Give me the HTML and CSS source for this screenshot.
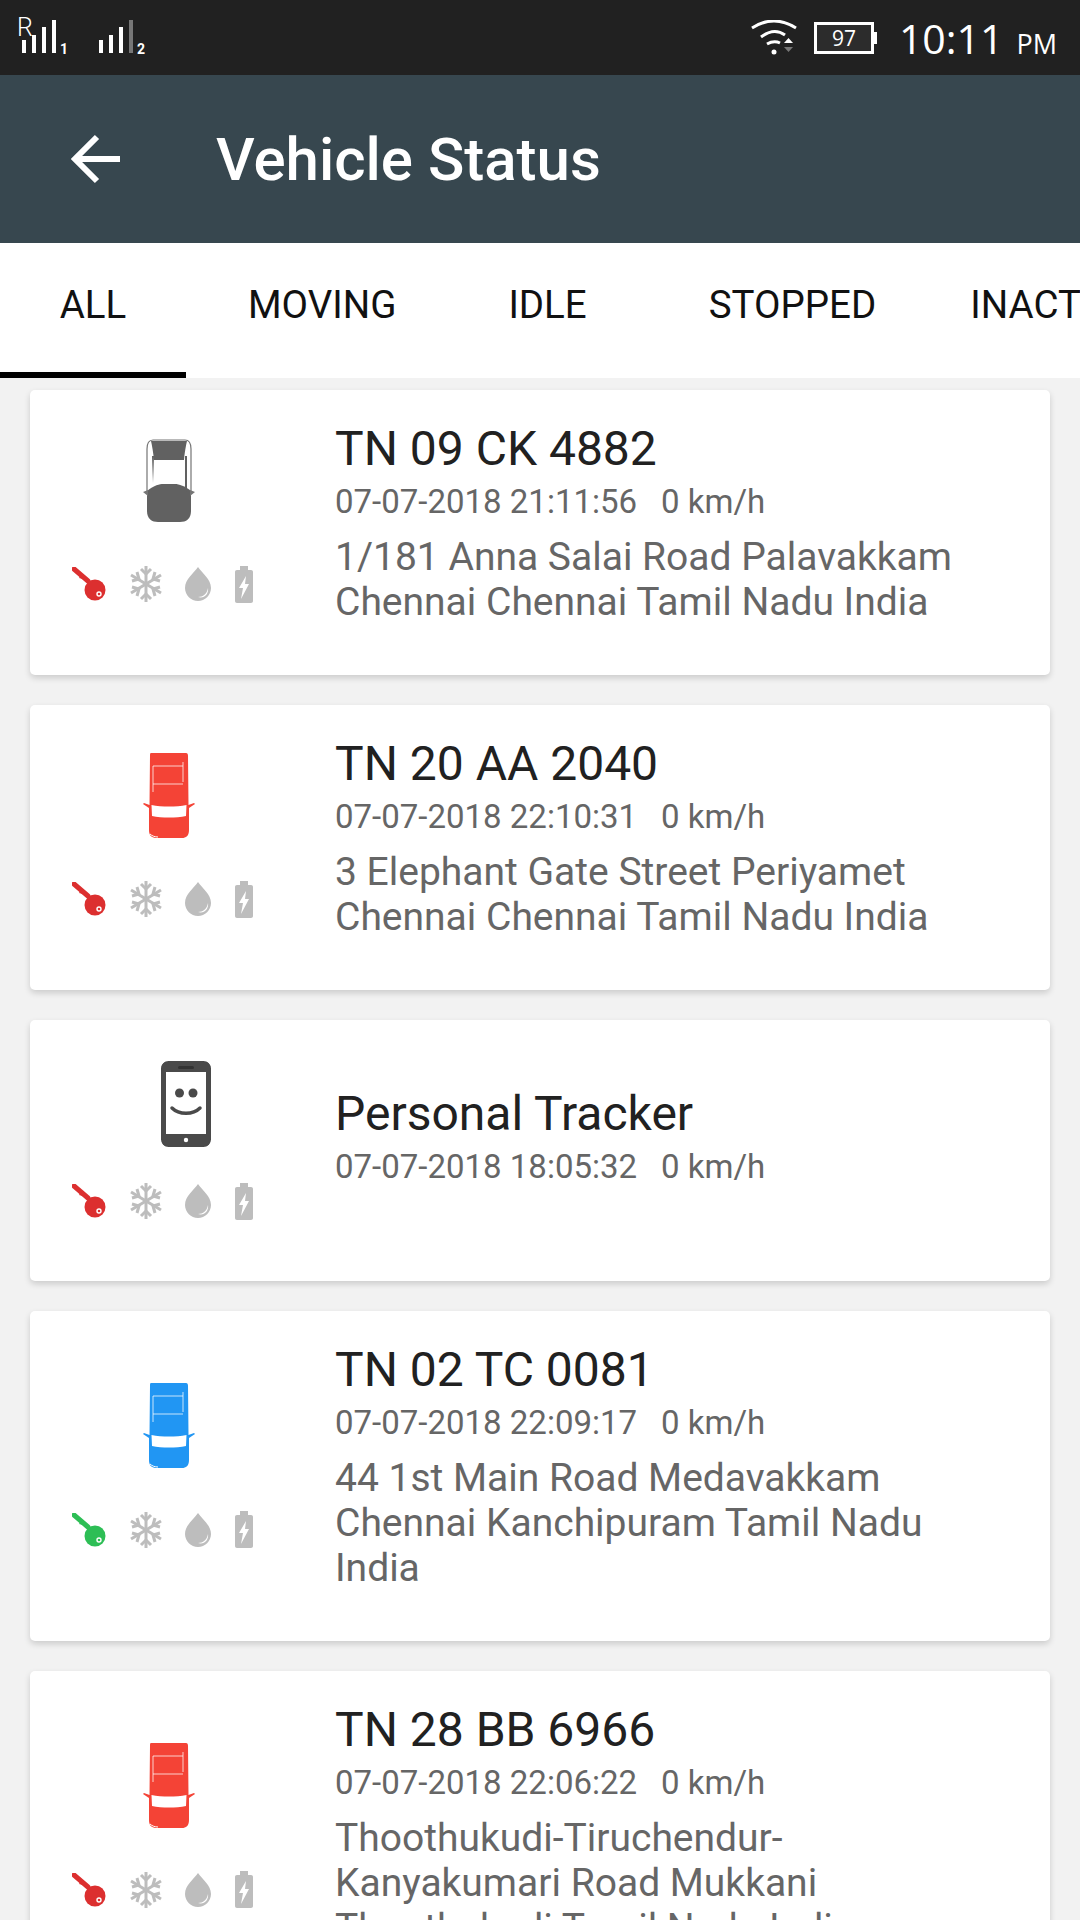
FILE: index.html
```html
<!DOCTYPE html>
<html lang="en">

<head>
  <meta charset="UTF-8">
  <title>Vehicle Status</title>
  <link rel="stylesheet" href="styles.css">
</head>

<body>

  <svg class="defs" width="0" height="0">
    <defs>
      <symbol id="key" viewBox="0 0 34 34">
        <path d="M2 2L16 14" fill="none" stroke="currentColor" stroke-width="5" stroke-linecap="round"/>
        <path d="M9 8L7 11L11 12Z" fill="currentColor"/>
        <circle cx="23" cy="23" r="10.500" fill="currentColor"/>
        <circle cx="27" cy="27" r="2" fill="none" stroke="#fff" stroke-width="1.400"/>
      </symbol>
      <symbol id="snow" viewBox="0 0 32 36">
        <g fill="none" stroke="#bdbdbd" stroke-width="3">
          <path d="M16 0V36"/>
          <path d="M1 9L31 27"/>
          <path d="M31 9L1 27"/>
          <path d="M11 3L16 8L21 3"/>
          <path d="M11 33L16 28L21 33"/>
          <path d="M2 15L9 13L7 6"/>
          <path d="M30 15L23 13L25 6"/>
          <path d="M2 21L9 23L7 30"/>
          <path d="M30 21L23 23L25 30"/>
        </g>
      </symbol>
      <symbol id="drop" viewBox="0 0 26 34">
        <path d="M13 0C17 6 26 12 26 21C26 28 20 34 13 34C6 34 0 28 0 21C0 12 9 6 13 0Z" fill="#bdbdbd"/>
        <path d="M13 30C18 30 22 27 23 21C24 27 19 32 13 30Z" fill="#fff"/>
      </symbol>
      <symbol id="batt" viewBox="0 0 18 37">
        <path d="M5 0H13V4H16C17.200 4 18 4.800 18 6V35C18 36.200 17.200 37 16 37H2C.8 37 0 36.200 0 35V6C0 4.800 .8 4 2 4H5Z" fill="#bdbdbd"/>
        <path d="M11 10L4 22H8L6 33L14 18H10Z" fill="#fff"/>
      </symbol>
      <symbol id="van" viewBox="0 0 54 86">
        <path d="M9 0H44C45.500 0 46 1 46 3L46.500 52L52 50L53 51L47 55V77C47 83 44 85 40 85H15C10 85 7 83 7 77V55L1 51L2 50L7.500 52L8 3C8 1 8 0 9 0Z" fill="currentColor"/>
        <path d="M11 13H41M11 31H41M11 13V39M41 9V29" fill="none" stroke="#fff" stroke-opacity=".75" stroke-width="1"/>
        <path d="M9.500 52C20 54 34 54 44.500 52L44 63C34 65 20 65 10 63Z" fill="#fff"/>
        <path d="M8 81C10 83 13 84 16 84" fill="none" stroke="#fff" stroke-width="1"/>
      </symbol>
    </defs>
  </svg>

  <div class="statusbar">
    <div class="signals">
      <div class="signal">
        <span class="roaming">R</span>
        <svg width="60" height="33" viewBox="0 0 60 33">
          <path d="M5 20h4v13H5zM15 15h4v18h-4zM25 7h4v26h-4zM35 0h4v33h-4z" fill="#fff"/>
        </svg>
        <span class="simnum">1</span>
      </div>
      <div class="signal">
        <svg width="60" height="33" viewBox="0 0 60 33">
          <path d="M5 20h4v13H5zM15 15h4v18h-4zM25 7h4v26h-4z" fill="#fff"/>
          <path d="M35 0h4v33h-4z" fill="#777"/>
        </svg>
        <span class="simnum">2</span>
      </div>
    </div>
    <div class="status-right">
      <svg class="wifi" width="46" height="36" viewBox="0 0 46 36">
        <g fill="none" stroke="#fff" stroke-width="3">
          <path d="M1 8Q23 -6 45 8"/>
          <path d="M10 17Q23 7 34 15"/>
          <path d="M16 24Q23 20 29 23"/>
        </g>
        <circle cx="23" cy="32" r="2.500" fill="#fff"/>
        <path d="M33 23L37.500 18L42 23Z" fill="#fff"/>
        <path d="M33 27H42L37.500 32Z" fill="#777"/>
      </svg>
      <div class="battery"><span>97</span></div>
      <div class="clock">10:11<span class="ampm">PM</span></div>
    </div>
  </div>

  <div class="toolbar">
    <svg class="back" width="50" height="50" viewBox="0 0 50 50">
      <path d="M3 25H49M26 3L4 25L26 47" fill="none" stroke="#fff" stroke-width="6"/>
    </svg>
    <div class="title">Vehicle Status</div>
  </div>

  <div class="tabs">
    <div class="tab active">ALL</div>
    <div class="tab moving">MOVING</div>
    <div class="tab idle">IDLE</div>
    <div class="tab stopped">STOPPED</div>
    <div class="tab inactive">INACTIVE</div>
  </div>

  <div class="list">

    <div class="card h285">
      <div class="left">
        <div class="vehicle">
          <svg width="54" height="84" viewBox="0 0 54 84">
            <path d="M5 52C12 46 18 45 21 45H33C37 45 43 47 49 52V72C49 80 44 83 38 83H16C10 83 5 80 5 72Z" fill="#616161"/>
            <path d="M9 2H45C45 2 43 10 42 21H12C11 10 9 2 9 2Z" fill="#616161"/>
            <path d="M5 55V10C5 4 7 1 11 1H43C47 1 49 4 49 10V55" fill="none" stroke="#757575" stroke-width="1.200"/>
            <path d="M10 17L12 17L11 44ZM43 17L45 17L45 53L43 48Z" fill="#616161"/>
            <path d="M1 53L6 51V57ZM53 53L48 51V57Z" fill="#757575"/>
          </svg>
        </div>
        <div class="flags">
          <svg class="key red"><use href="#key"/></svg>
          <svg class="snow"><use href="#snow"/></svg>
          <svg class="drop"><use href="#drop"/></svg>
          <svg class="batt"><use href="#batt"/></svg>
        </div>
      </div>
      <div class="info">
        <div class="plate">TN 09 CK 4882</div>
        <div class="meta">07-07-2018 21:11:56<span class="speed">0 km/h</span></div>
        <div class="addr">1/181 Anna Salai Road Palavakkam Chennai Chennai Tamil Nadu India</div>
      </div>
    </div>

    <div class="card h285">
      <div class="left">
        <div class="vehicle">
          <svg class="red-van" width="54" height="86"><use href="#van"/></svg>
        </div>
        <div class="flags">
          <svg class="key red"><use href="#key"/></svg>
          <svg class="snow"><use href="#snow"/></svg>
          <svg class="drop"><use href="#drop"/></svg>
          <svg class="batt"><use href="#batt"/></svg>
        </div>
      </div>
      <div class="info">
        <div class="plate">TN 20 AA 2040</div>
        <div class="meta">07-07-2018 22:10:31<span class="speed">0 km/h</span></div>
        <div class="addr">3 Elephant Gate Street Periyamet Chennai Chennai Tamil Nadu India</div>
      </div>
    </div>

    <div class="card h261">
      <div class="left tracker">
        <div class="vehicle">
          <svg width="50" height="86" viewBox="0 0 50 86">
            <rect x="2.500" y="2.500" width="45" height="81" rx="5" fill="#fff" stroke="#4a4a4a" stroke-width="5"/>
            <path d="M1 11V6C1 3 3 1 6 1H44C47 1 49 3 49 6V11ZM1 73V80C1 83 3 85 6 85H44C47 85 49 83 49 80V73Z" fill="#4a4a4a"/>
            <rect x="17" y="5" width="16" height="3" rx="1.500" fill="#333"/>
            <circle cx="25" cy="79" r="2.200" fill="#fff"/>
            <circle cx="18.500" cy="32" r="4.500" fill="#4a4a4a"/>
            <circle cx="32" cy="32" r="4.500" fill="#4a4a4a"/>
            <path d="M11 47C18 54 32 54 39 47" fill="none" stroke="#4a4a4a" stroke-width="3.500" stroke-linecap="round"/>
          </svg>
        </div>
        <div class="flags">
          <svg class="key red"><use href="#key"/></svg>
          <svg class="snow"><use href="#snow"/></svg>
          <svg class="drop"><use href="#drop"/></svg>
          <svg class="batt"><use href="#batt"/></svg>
        </div>
      </div>
      <div class="info no-addr">
        <div class="plate">Personal Tracker</div>
        <div class="meta">07-07-2018 18:05:32<span class="speed">0 km/h</span></div>
      </div>
    </div>

    <div class="card h330">
      <div class="left">
        <div class="vehicle">
          <svg class="blue-van" width="54" height="86"><use href="#van"/></svg>
        </div>
        <div class="flags">
          <svg class="key green"><use href="#key"/></svg>
          <svg class="snow"><use href="#snow"/></svg>
          <svg class="drop"><use href="#drop"/></svg>
          <svg class="batt"><use href="#batt"/></svg>
        </div>
      </div>
      <div class="info">
        <div class="plate">TN 02 TC 0081</div>
        <div class="meta">07-07-2018 22:09:17<span class="speed">0 km/h</span></div>
        <div class="addr">44 1st Main Road Medavakkam Chennai Kanchipuram Tamil Nadu India</div>
      </div>
    </div>

    <div class="card h330">
      <div class="left">
        <div class="vehicle">
          <svg class="red-van" width="54" height="86"><use href="#van"/></svg>
        </div>
        <div class="flags">
          <svg class="key red"><use href="#key"/></svg>
          <svg class="snow"><use href="#snow"/></svg>
          <svg class="drop"><use href="#drop"/></svg>
          <svg class="batt"><use href="#batt"/></svg>
        </div>
      </div>
      <div class="info">
        <div class="plate">TN 28 BB 6966</div>
        <div class="meta">07-07-2018 22:06:22<span class="speed">0 km/h</span></div>
        <div class="addr">Thoothukudi-Tiruchendur-Kanyakumari Road Mukkani Thoothukudi Tamil Nadu India</div>
      </div>
    </div>

  </div>

</body>

</html>
```

FILE: styles.css
```css
html, body {
  margin: 0;
  padding: 0;
  height: 1920px;
  overflow: hidden;
}

body {
  background-color: #f2f2f2;
  font-family: Roboto, "Liberation Sans", sans-serif;
}

.defs {
  display: block;
  height: 0;
}

/* status bar */
.statusbar {
  height: 75px;
  background-color: #212121;
  color: white;
  display: flex;
  justify-content: space-between;
  align-items: center;
}

.signals {
  display: flex;
  gap: 17px;
  padding-left: 17px;
  padding-bottom: 2px;
}

.signal {
  display: flex;
  align-items: flex-end;
  position: relative;
  width: 60px;
}

.signal svg {
  display: block;
}

.roaming {
  position: absolute;
  left: 0;
  top: -7px;
  font-size: 25px;
  font-weight: 300;
  line-height: 30px;
}

.simnum {
  position: absolute;
  left: 43px;
  bottom: -3px;
  font-size: 14px;
  line-height: 14px;
  font-weight: bold;
}

.status-right {
  display: flex;
  align-items: center;
  padding-right: 23px;
}

.wifi {
  margin-right: 17px;
}

.battery {
  box-sizing: border-box;
  width: 60px;
  height: 32px;
  border: 3px solid white;
  background-color: #2c2c2c;
  display: flex;
  align-items: center;
  justify-content: center;
  position: relative;
  font-size: 21px;
  font-family: "Open Sans", sans-serif;
}

.battery::after {
  content: "";
  position: absolute;
  right: -6px;
  top: 7px;
  width: 3px;
  height: 12px;
  background-color: white;
}

.clock {
  margin-left: 25px;
  font-size: 41px;
  font-family: "Open Sans", sans-serif;
  font-weight: 400;
}

.ampm {
  font-size: 27px;
  margin-left: 13px;
  font-weight: 400;
}

/* toolbar */
.toolbar {
  height: 168px;
  background-color: #37474f;
  display: flex;
  align-items: center;
}

.back {
  margin-left: 71px;
}

.title {
  margin-left: 95px;
  font-size: 60px;
  font-weight: 500;
  color: white;
}

/* tabs */
.tabs {
  height: 135px;
  background-color: white;
  display: flex;
  align-items: center;
  overflow: hidden;
  font-size: 38.5px;
  color: #111;
  white-space: nowrap;
}

.tab {
  height: 135px;
  line-height: 123px;
  box-sizing: border-box;
  flex-shrink: 0;
}

.tab.active {
  width: 186px;
  text-align: center;
  border-bottom: 6px solid #000;
}

.moving {
  margin-left: 62px;
}

.idle {
  margin-left: 112px;
}

.stopped {
  margin-left: 122px;
}

.inactive {
  margin-left: 94px;
}

/* list */
.list {
  padding: 12px 30px 0;
  display: flex;
  flex-direction: column;
  gap: 30px;
}

.card {
  background-color: white;
  border-radius: 5px;
  box-shadow: 0 3px 6px rgba(0, 0, 0, 0.16);
  display: flex;
  flex-shrink: 0;
  box-sizing: border-box;
}

.h285 {
  height: 285px;
}

.h261 {
  height: 261px;
}

.h330 {
  height: 330px;
}

.left {
  width: 305px;
  box-sizing: border-box;
  padding-bottom: 21px;
  flex-shrink: 0;
  display: flex;
  flex-direction: column;
  justify-content: center;
}

.h285 .left {
  padding-bottom: 25px;
}

.vehicle {
  width: 278px;
  height: 86px;
  display: flex;
  justify-content: center;
  align-items: center;
}

.tracker .vehicle {
  width: 312px;
}

.vehicle svg {
  display: block;
}

.flags {
  display: flex;
  align-items: center;
  margin-top: 42px;
  padding-left: 42px;
  height: 37px;
}

.tracker .flags {
  margin-top: 36px;
}

.flags svg {
  display: block;
  flex-shrink: 0;
}

.key {
  width: 34px;
  height: 34px;
}

.snow {
  width: 32px;
  height: 36px;
  margin-left: 24px;
}

.drop {
  width: 26px;
  height: 34px;
  margin-left: 23px;
}

.batt {
  width: 18px;
  height: 37px;
  margin-left: 24px;
}

.red {
  color: #dc2f2f;
}

.green {
  color: #2dbe55;
}

.red-van {
  color: #f44336;
}

.blue-van {
  color: #2196f3;
}

.info {
  padding-top: 32px;
  width: 625px;
}

.no-addr {
  padding-top: 67px;
}

.plate {
  font-size: 48px;
  line-height: 54px;
  color: #212121;
}

.meta {
  font-size: 33px;
  line-height: 38px;
  margin-top: 7px;
  color: #666;
}

.speed {
  margin-left: 24px;
}

.addr {
  font-size: 39px;
  line-height: 45px;
  margin-top: 14px;
  color: #666;
}
```
